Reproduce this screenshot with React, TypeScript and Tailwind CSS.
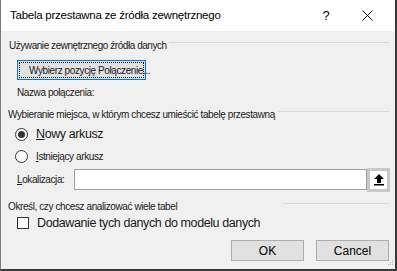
import React from "react";

export default function App() {
  const f = { fontFamily: '"Liberation Sans", Arial, sans-serif' };
  return (
    <div
      className="w-[397px] h-[271px] bg-[#f0f0f0] border-l border-l-[#7a7a7a] border-r-2 border-r-[#3a3a3a] border-b-2 border-b-[#3a3a3a] flex flex-col text-[#1a1a1a] overflow-hidden relative"
      style={f}
    >
      {/* Title bar */}
      <div className="h-[31px] bg-white flex items-center shrink-0">
        <div className="pl-[9px] text-[11.5px] tracking-[-0.25px] text-black flex-1">Tabela przestawna ze źródła zewnętrznego</div>
        <div className="w-[40px] flex justify-center text-[13px] text-black mr-[1px]">?</div>
        <div className="w-[40px] flex justify-center mr-[8px]">
          <svg width="11" height="11" viewBox="0 0 11 11">
            <path d="M0.5 0.5 L10.5 10.5 M10.5 0.5 L0.5 10.5" stroke="#111" strokeWidth="1" />
          </svg>
        </div>
      </div>

      {/* Section 1 */}
      <div className="flex items-center pl-[8px] pr-[6px] mt-[8px] h-[12px]">
        <span className="text-[10px] tracking-[-0.45px] whitespace-nowrap">Używanie zewnętrznego źródła danych</span>
        <div className="flex-1 h-px bg-[#d9d9d9] ml-[2px] -mt-[6px]" />
      </div>
      <div className="pl-[16px] mt-[9px]">
        <div className="w-[129px] h-[20px] border border-[#0078d7] bg-[#e1e1e1] p-[1px] relative">
          <div className="w-full h-full border border-dotted border-black flex items-center pl-[9px] whitespace-nowrap text-[10px] tracking-[-0.4px] overflow-visible">
            Wybierz pozycję Połączenie...
          </div>
        </div>
      </div>
      <div className="pl-[16px] mt-[7px] text-[10px] tracking-[-0.4px] h-[12px] leading-[12px]">Nazwa połączenia:</div>

      {/* Section 2 */}
      <div className="flex items-center pl-[7px] pr-[6px] mt-[9px] h-[12px]">
        <span className="text-[10px] tracking-[-0.4px] whitespace-nowrap">Wybieranie miejsca, w którym chcesz umieścić tabelę przestawną</span>
        <div className="flex-1 h-px bg-[#d9d9d9] ml-[3px] -mt-[6px]" />
      </div>
      <div className="flex items-center pl-[14px] mt-[7px] h-[14px]">
        <div className="w-[13px] h-[13px] rounded-full border border-[#333] bg-white flex items-center justify-center">
          <div className="w-[7px] h-[7px] rounded-full bg-[#333]" />
        </div>
        <span className="ml-[8px] text-[12.5px] tracking-[-0.4px]"><span className="underline">N</span>owy arkusz</span>
      </div>
      <div className="flex items-center pl-[14px] mt-[8px] h-[14px]">
        <div className="w-[13px] h-[13px] rounded-full border border-[#333] bg-white" />
        <span className="ml-[8px] text-[10px] tracking-[-0.4px]"><span className="underline">I</span>stniejący arkusz</span>
      </div>
      <div className="flex items-center pl-[16px] mt-[5px] h-[23px]">
        <span className="text-[10px] tracking-[-0.4px] w-[57px]"><span className="underline">L</span>okalizacja:</span>
        <div className="w-[293px] h-[21px] bg-white border border-[#a0a0a0]" />
        <div className="w-[23px] h-[24px] border-[3px] border-[#c8c8c8] bg-white flex items-center justify-center">
          <svg width="10" height="12" viewBox="0 0 10 12">
            <path d="M5 0 L10 5 L7 5 L7 9 L3 9 L3 5 L0 5 Z" fill="#000" />
            <rect x="0" y="10" width="10" height="1.5" fill="#000" />
          </svg>
        </div>
      </div>

      {/* Section 3 */}
      <div className="flex items-center pl-[7px] pr-[6px] mt-[9px] h-[12px]">
        <span className="text-[10px] tracking-[-0.4px] whitespace-nowrap w-[275px]">Określ, czy chcesz analizować wiele tabel</span>
        <div className="flex-1 h-px bg-[#d9d9d9] -mt-[6px]" />
      </div>
      <div className="flex items-center pl-[16px] mt-[4px] h-[14px]">
        <div className="w-[12px] h-[12px] border border-[#333] bg-white" />
        <span className="ml-[8px] text-[12.5px] tracking-[-0.4px]">Dodawanie tych danych do modelu danych</span>
      </div>

      {/* Buttons */}
      <div className="flex justify-end pr-[6px] mt-[10px] gap-[12px]">
        <div className="w-[73px] h-[21px] bg-[#e1e1e1] border border-[#adadad] flex items-center justify-center text-[12px] text-black">OK</div>
        <div className="w-[73px] h-[21px] bg-[#e1e1e1] border border-[#adadad] flex items-center justify-center text-[12px] text-black">Cancel</div>
      </div>
      <div className="absolute left-[387px] top-[260px]">
        <svg width="6" height="6" viewBox="0 0 6 6">
          <rect x="4" y="0" width="1" height="1" fill="#b0b0b0" />
          <rect x="2" y="2" width="1" height="1" fill="#b0b0b0" />
          <rect x="4" y="2" width="1" height="1" fill="#b0b0b0" />
          <rect x="0" y="4" width="1" height="1" fill="#b0b0b0" />
          <rect x="2" y="4" width="1" height="1" fill="#b0b0b0" />
          <rect x="4" y="4" width="1" height="1" fill="#b0b0b0" />
        </svg>
      </div>
    </div>
  );
}
